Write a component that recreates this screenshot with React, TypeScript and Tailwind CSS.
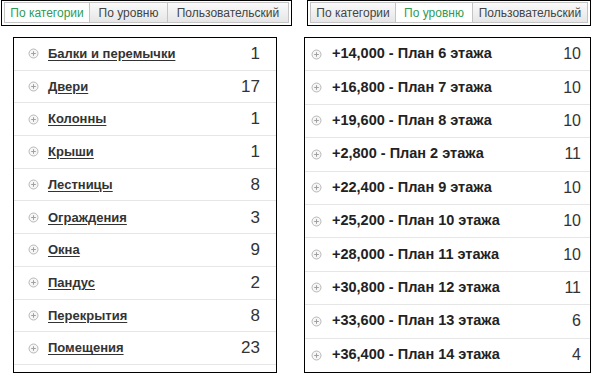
import React from "react";

const categories = [
  { name: "Балки и перемычки", count: 1 },
  { name: "Двери", count: 17 },
  { name: "Колонны", count: 1 },
  { name: "Крыши", count: 1 },
  { name: "Лестницы", count: 8 },
  { name: "Ограждения", count: 3 },
  { name: "Окна", count: 9 },
  { name: "Пандус", count: 2 },
  { name: "Перекрытия", count: 8 },
  { name: "Помещения", count: 23 },
];

const levels = [
  { name: "+14,000 - План 6 этажа", count: 10 },
  { name: "+16,800 - План 7 этажа", count: 10 },
  { name: "+19,600 - План 8 этажа", count: 10 },
  { name: "+2,800 - План 2 этажа", count: 11 },
  { name: "+22,400 - План 9 этажа", count: 10 },
  { name: "+25,200 - План 10 этажа", count: 10 },
  { name: "+28,000 - План 11 этажа", count: 10 },
  { name: "+30,800 - План 12 этажа", count: 11 },
  { name: "+33,600 - План 13 этажа", count: 6 },
  { name: "+36,400 - План 14 этажа", count: 4 },
];

const tabs = ["По категории", "По уровню", "Пользовательский"];

function PlusIcon() {
  return (
    <svg width="11" height="11" viewBox="0 0 11 11" className="shrink-0">
      <circle cx="5.5" cy="5.5" r="4.5" fill="#f6f6f6" stroke="#b8b8b8" strokeWidth="1" />
      <path d="M5.5 3.2v4.6M3.2 5.5h4.6" stroke="#a0a0a0" strokeWidth="1" />
    </svg>
  );
}

function TabBar({ active, widths }: { active: number; widths: string[] }) {
  return (
    <div className="flex h-[26px] border border-black bg-white pl-[2px] pr-[2px] pt-[1px] pb-[2px]">
      {tabs.map((t, i) => (
        <div
          key={t}
          className={
            "flex items-center justify-center border border-[#c4c4c4] text-[12px] " +
            widths[i] +
            (i > 0 ? " -ml-px" : "") +
            (i === active
              ? " bg-white text-[#2e9b55]"
              : " bg-gradient-to-b from-[#fafafa] to-[#e6e6e6] text-[#444]")
          }
        >
          {t}
        </div>
      ))}
    </div>
  );
}

export default function App() {
  return (
    <div className="flex h-[379px] w-[598px] bg-white font-['Liberation_Sans',Arial,sans-serif] text-[#222]">
      <div className="w-[304px] pl-[1px]">
        <div className="w-[291px]">
          <TabBar active={0} widths={["w-[86px]", "w-[79px]", "w-[122px]"]} />
        </div>
        <div className="ml-[12px] mt-[11px] h-[336px] w-[264px] border border-black">
          {categories.map((c) => (
            <div
              key={c.name}
              className="flex h-[32.7px] items-center border-b border-[#e6e6e6] pl-[14px] pr-[16px]"
            >
              <PlusIcon />
              <span className="ml-[9px] flex-1 text-[13px] font-bold text-[#333] underline decoration-[#333] underline-offset-2">
                {c.name}
              </span>
              <span className="text-[17px] text-[#333]">{c.count}</span>
            </div>
          ))}
        </div>
      </div>
      <div className="w-[294px]">
        <div className="ml-[3px] w-[284px]">
          <TabBar active={1} widths={["w-[86px]", "w-[78px]", "w-[116px]"]} />
        </div>
        <div className="mt-[11px] h-[336px] w-[287px] border border-black">
          {levels.map((l, i) => (
            <div
              key={l.name}
              className={
                "flex h-[33.4px] items-center pl-[6px] pr-[9px]" +
                (i < levels.length - 1 ? " border-b border-[#e6e6e6]" : "")
              }
            >
              <PlusIcon />
              <span className="ml-[10px] flex-1 text-[14.5px] font-bold text-[#222]">{l.name}</span>
              <span className="text-[16px] text-[#333]">{l.count}</span>
            </div>
          ))}
        </div>
      </div>
    </div>
  );
}
